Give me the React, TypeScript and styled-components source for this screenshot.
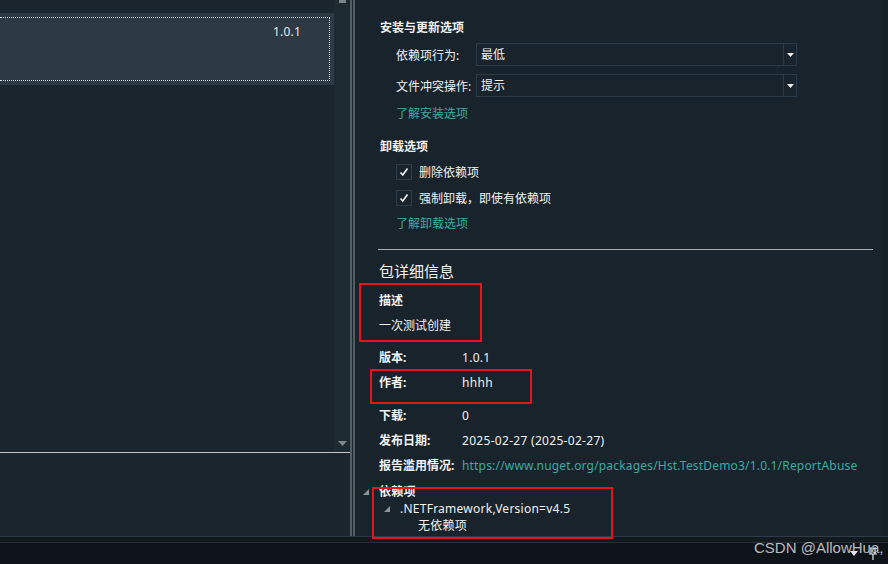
import React from 'react'
import styled, { createGlobalStyle } from 'styled-components'

const GlobalStyle = createGlobalStyle`
  *, *::before, *::after {
    box-sizing: border-box;
  }

  html,
  body {
    margin: 0;
    padding: 0;
    background: #18232b;
  }

  body {
    font-family: 'Noto Sans', 'Noto Sans CJK SC', sans-serif;
    font-size: 12px;
    color: #f1f1f1;
  }
`

const Screen = styled.div`
  position: relative;
  width: 888px;
  height: 564px;
  overflow: hidden;
  display: flex;
  flex-direction: column;
`

const Workspace = styled.div`
  display: flex;
  height: 536px;
`

/* ---------- left pane (package list) ---------- */

const LeftPane = styled.div`
  width: 350px;
  display: flex;
  flex-direction: column;
  background: #1a252d;
`

const ListArea = styled.div`
  display: flex;
  height: 453px;
  border-bottom: 1px solid #c4c6c7;
`

const List = styled.div`
  flex: 1;
  padding-top: 13px;
`

const SelectedRow = styled.div`
  height: 72px;
  padding: 4px 4px 4px 0;
  background: #2e3a43;
`

const FocusBox = styled.div`
  height: 100%;
  display: flex;
  justify-content: flex-end;
  padding: 6px 28px 0 0;
  border: 1px dotted #dcdcdc;
  border-left: none;
  color: #e8e8e8;
  line-height: 16px;
  letter-spacing: 0.2px;
`

const VScroll = styled.div`
  width: 16px;
  display: flex;
  flex-direction: column;
  justify-content: space-between;
  align-items: center;
  padding-bottom: 6px;
  background: #1e2a32;
`

const Splitter = styled.div`
  width: 5px;
  border-left: 2px solid #535d64;
  border-right: 2px solid #535d64;
  background: #1b252c;
`

/* ---------- right pane (options + details) ---------- */

const RightPane = styled.div`
  flex: 1;
  display: flex;
  background: #18232b;
`

const Content = styled.div`
  flex: 1;
  display: flex;
  flex-direction: column;
  padding: 19px 0 0 24px;
`

const RightRail = styled.div`
  width: 7px;
  background: #152027;
`

const SectionTitle = styled.div<{ $top?: number }>`
  margin: ${({ $top }) => $top ?? 0}px 0 0 1px;
  font-weight: 700;
  line-height: 18px;
`

const OptionList = styled.div`
  display: flex;
  flex-direction: column;
  gap: 8px;
  margin: 6px 0 0 17px;
`

const OptionRow = styled.div`
  display: flex;
  align-items: center;
  height: 23px;
`

const OptionLabel = styled.span`
  width: 80px;
`

const Select = styled.div`
  width: 321px;
  height: 23px;
  display: flex;
  border: 1px solid #2a3b47;
`

const SelectValue = styled.span`
  flex: 1;
  padding-left: 4px;
  line-height: 21px;
`

const SelectButton = styled.span`
  width: 13px;
  display: flex;
  align-items: center;
  justify-content: center;
  border-left: 1px solid #2a3b47;
`

const Link = styled.a<{ $top: number }>`
  display: block;
  margin: ${({ $top }) => $top}px 0 0 17px;
  color: #3fa9a3;
  line-height: 18px;
  text-decoration: none;
`

const CheckList = styled.div`
  display: flex;
  flex-direction: column;
  gap: 10px;
  margin: 8px 0 0 17px;
`

const CheckRow = styled.label`
  display: flex;
  align-items: center;
  gap: 7px;
  height: 16px;
`

const CheckBox = styled.span`
  width: 16px;
  height: 16px;
  display: flex;
  align-items: center;
  justify-content: center;
  border: 1px solid #2d3e4a;
`

const Divider = styled.div`
  width: 495px;
  height: 1px;
  margin: 16px 0 0 -1px;
  background: #a9afb2;
`

const PackageTitle = styled.div`
  margin-top: 11px;
  font-size: 15px;
  line-height: 20px;
`

const DescLabel = styled.div`
  margin-top: 11px;
  font-weight: 700;
  line-height: 18px;
`

const DescText = styled.div`
  margin-top: 7px;
  line-height: 18px;
`

const Details = styled.div`
  margin-top: 14px;
  display: flex;
  flex-direction: column;
`

const DetailRow = styled.div<{ $height?: number }>`
  display: flex;
  height: ${({ $height }) => $height ?? 25}px;
  line-height: 18px;
`

const DetailLabel = styled.span`
  width: 83px;
  font-weight: 700;
`

const DetailValue = styled.span`
  letter-spacing: 0.3px;
`

const DetailLink = styled.a`
  color: #3fa9a3;
  text-decoration: none;
  white-space: nowrap;
  letter-spacing: 0.18px;
`

const Tree = styled.div`
  margin-top: 1px;
  display: flex;
  flex-direction: column;
`

const TreeRow = styled.div<{ $indent: number; $bold?: boolean }>`
  display: flex;
  align-items: center;
  height: 17px;
  margin-left: ${({ $indent }) => $indent}px;
  font-weight: ${({ $bold }) => ($bold ? 700 : 400)};
  line-height: 17px;
  letter-spacing: 0.25px;
`

const Expander = styled.span`
  width: 16px;
  height: 17px;
  display: flex;
  align-items: center;
  padding-left: 2px;
  margin-right: 2px;
`

/* ---------- bottom bars ---------- */

const BottomStrip = styled.div`
  height: 7px;
  background: #121a20;
  border-top: 1px solid #2f3c45;
  border-bottom: 1px solid #262f35;
`

const StatusBar = styled.div`
  height: 21px;
  display: flex;
  justify-content: flex-end;
  align-items: center;
  gap: 10px;
  padding-right: 10px;
  background: #0e1319;
`

/* ---------- overlays ---------- */

const Annotation = styled.div<{ $x: number; $y: number; $w: number; $h: number }>`
  position: absolute;
  left: ${({ $x }) => $x}px;
  top: ${({ $y }) => $y}px;
  width: ${({ $w }) => $w}px;
  height: ${({ $h }) => $h}px;
  border: 2px solid #e3151d;
  pointer-events: none;
`

const Watermark = styled.div`
  position: absolute;
  left: 754px;
  top: 538px;
  font-family: 'Liberation Sans', 'Noto Sans CJK SC', sans-serif;
  font-size: 15px;
  line-height: 20px;
  color: rgba(225, 225, 225, 0.82);
  white-space: nowrap;
  pointer-events: none;
`

const DropArrow = () => (
  <svg width="7" height="4" viewBox="0 0 7 4">
    <polygon points="0,0 7,0 3.5,4" fill="#f0f0f0" />
  </svg>
)

const CheckMark = () => (
  <svg width="12" height="12" viewBox="0 0 12 12">
    <path d="M2.5 6.5 L4.8 9 L9.5 2.5" fill="none" stroke="#f2f2f2" strokeWidth="1.6" />
  </svg>
)

const TreeGlyph = () => (
  <svg width="6" height="6" viewBox="0 0 6 6">
    <polygon points="6,0 6,6 0,6" fill="#8d9499" />
  </svg>
)

const options = [
  { label: '依赖项行为:', value: '最低' },
  { label: '文件冲突操作:', value: '提示' },
]

const uninstallOptions = ['删除依赖项', '强制卸载，即使有依赖项']

const App: React.FC = () => {
  return (
    <>
      <GlobalStyle />
      <Screen>
        <Workspace>
          <LeftPane>
            <ListArea>
              <List>
                <SelectedRow>
                  <FocusBox>1.0.1</FocusBox>
                </SelectedRow>
              </List>
              <VScroll>
                <svg width="9" height="3" viewBox="0 0 9 3">
                  <rect x="1" y="0" width="7" height="3" fill="#7d858a" />
                </svg>
                <svg width="9" height="5" viewBox="0 0 9 5">
                  <polygon points="0,0 9,0 4.5,5" fill="#80878c" />
                </svg>
              </VScroll>
            </ListArea>
          </LeftPane>

          <Splitter />

          <RightPane>
            <Content>
              <SectionTitle>安装与更新选项</SectionTitle>
              <OptionList>
                {options.map((o) => (
                  <OptionRow key={o.label}>
                    <OptionLabel>{o.label}</OptionLabel>
                    <Select>
                      <SelectValue>{o.value}</SelectValue>
                      <SelectButton>
                        <DropArrow />
                      </SelectButton>
                    </Select>
                  </OptionRow>
                ))}
              </OptionList>
              <Link $top={8}>了解安装选项</Link>

              <SectionTitle $top={15}>卸载选项</SectionTitle>
              <CheckList>
                {uninstallOptions.map((text) => (
                  <CheckRow key={text}>
                    <CheckBox>
                      <CheckMark />
                    </CheckBox>
                    {text}
                  </CheckRow>
                ))}
              </CheckList>
              <Link $top={9}>了解卸载选项</Link>

              <Divider />

              <PackageTitle>包详细信息</PackageTitle>
              <DescLabel>描述</DescLabel>
              <DescText>一次测试创建</DescText>

              <Details>
                <DetailRow>
                  <DetailLabel>版本:</DetailLabel>
                  <DetailValue>1.0.1</DetailValue>
                </DetailRow>
                <DetailRow $height={33}>
                  <DetailLabel>作者:</DetailLabel>
                  <DetailValue>hhhh</DetailValue>
                </DetailRow>
                <DetailRow>
                  <DetailLabel>下载:</DetailLabel>
                  <DetailValue>0</DetailValue>
                </DetailRow>
                <DetailRow>
                  <DetailLabel>发布日期:</DetailLabel>
                  <DetailValue>2025-02-27 (2025-02-27)</DetailValue>
                </DetailRow>
                <DetailRow>
                  <DetailLabel>报告滥用情况:</DetailLabel>
                  <DetailLink>https://www.nuget.org/packages/Hst.TestDemo3/1.0.1/ReportAbuse</DetailLink>
                </DetailRow>
              </Details>

              <Tree>
                <TreeRow $indent={-18} $bold>
                  <Expander>
                    <TreeGlyph />
                  </Expander>
                  依赖项
                </TreeRow>
                <TreeRow $indent={3}>
                  <Expander>
                    <TreeGlyph />
                  </Expander>
                  .NETFramework,Version=v4.5
                </TreeRow>
                <TreeRow $indent={21}>
                  <Expander />
                  无依赖项
                </TreeRow>
              </Tree>
            </Content>
            <RightRail />
          </RightPane>
        </Workspace>

        <BottomStrip />
        <StatusBar>
          <svg width="8" height="5" viewBox="0 0 8 5">
            <polygon points="0,0 8,0 4,5" fill="#e6e6e6" />
          </svg>
          <svg width="10" height="14" viewBox="0 0 10 14">
            <path d="M2 1 H8 M3 1 V7 M7 1 V7 M1 7 H9 M5 7 V13" fill="none" stroke="#e6e6e6" strokeWidth="1.2" />
          </svg>
        </StatusBar>

        <Annotation $x={359} $y={283} $w={123} $h={59} />
        <Annotation $x={370} $y={369} $w={162} $h={35} />
        <Annotation $x={372} $y={487} $w={241} $h={52} />
        <Watermark>CSDN @AllowHua,</Watermark>
      </Screen>
    </>
  )
}

export default App
